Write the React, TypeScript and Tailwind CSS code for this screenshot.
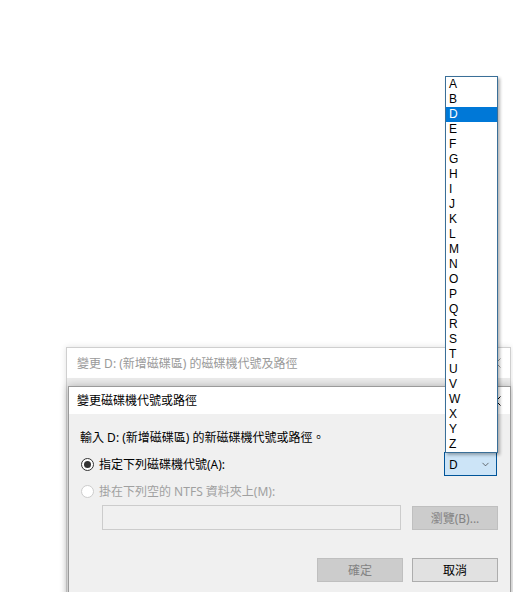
import { ChevronDown } from 'lucide-react'

const LETTERS = ['A', 'B', 'D', 'E', 'F', 'G', 'H', 'I', 'J', 'K', 'L', 'M', 'N', 'O', 'P', 'Q', 'R', 'S', 'T', 'U', 'V', 'W', 'X', 'Y', 'Z']
const SELECTED = 'D'

function CloseX({ className }: { className: string }) {
  return (
    <svg width="10" height="10" viewBox="0 0 10 10" className={className}>
      <path d="M0.5 0.5 L9.5 9.5 M9.5 0.5 L0.5 9.5" stroke="currentColor" strokeWidth="1" fill="none" />
    </svg>
  )
}

function Radio({ checked, disabled }: { checked?: boolean; disabled?: boolean }) {
  return (
    <span
      className={
        'flex h-[13px] w-[13px] items-center justify-center rounded-full border bg-white ' +
        (disabled ? 'border-[#cccccc]' : 'border-[#333333]')
      }
    >
      {checked && <span className="h-[7px] w-[7px] rounded-full bg-[#333333]" />}
    </span>
  )
}

function Button({ label, disabled }: { label: string; disabled?: boolean }) {
  return (
    <div
      className={
        'flex h-[24px] w-[86px] items-center justify-center border text-[12px] ' +
        (disabled
          ? 'border-[#bfbfbf] bg-[#cccccc] text-[#838383]'
          : 'border-[#adadad] bg-[#e1e1e1] text-[#000000]')
      }
    >
      {label}
    </div>
  )
}

function App() {
  return (
    <div className="relative h-[592px] w-[513px] overflow-hidden bg-white font-['Noto_Sans','Noto_Sans_CJK_TC',sans-serif] text-[12px] leading-[15px]">
      {/* back window */}
      <div className="absolute left-[66px] top-[347px] h-[260px] w-[445px] border border-[#cfcfcf] bg-[#ebebeb] shadow-[0_0_6px_rgba(0,0,0,0.12)]">
        <div className="flex h-[30px] items-center justify-between bg-white pl-[10px] pr-[8px]">
          <span className="text-[#9a9a9a]">變更 D: (新增磁碟區) 的磁碟機代號及路徑</span>
          <CloseX className="mr-[1px] text-[#9a9a9a]" />
        </div>
      </div>

      {/* front window */}
      <div className="absolute left-[68px] top-[386px] h-[220px] w-[443px] border border-[#9a9a9a] bg-[#f0f0f0] shadow-[0_0_8px_rgba(0,0,0,0.25)]">
        <div className="flex h-[27px] items-center justify-between bg-white pl-[8px] pr-[8px]">
          <span className="text-[#000000]">變更磁碟機代號或路徑</span>
          <CloseX className="mr-[1px] text-[#000000]" />
        </div>

        <div className="pl-[11px] pr-[12px] pt-[16px]">
          <p className="h-[15px] text-[#000000]">輸入 D: (新增磁碟區) 的新磁碟機代號或路徑。</p>

          <div className="mt-[7px] flex h-[24px] items-center justify-between pr-[1px]">
            <div className="flex items-center gap-[5px] pl-[1px]">
              <Radio checked />
              <span className="text-[#000000]">指定下列磁碟機代號(A):</span>
            </div>
            <div className="flex h-[24px] w-[53px] items-center justify-between border border-[#005499] bg-[#cce4f7] pl-[4px] pr-[5px]">
              <span className="text-[#000000]">D</span>
              <ChevronDown size={11} strokeWidth={1.5} className="text-[#333333]" />
            </div>
          </div>

          <div className="mt-[3px] flex h-[24px] items-center gap-[5px] pl-[1px]">
            <Radio disabled />
            <span className="text-[#a0a0a0]">掛在下列空的 NTFS 資料夾上(M):</span>
          </div>

          <div className="mt-[2px] flex items-start justify-between pl-[22px]">
            <div className="h-[25px] w-[299px] border border-[#cccccc] bg-[#f0f0f0]" />
            <div className="mt-[1px]">
              <Button label="瀏覽(B)..." disabled />
            </div>
          </div>

          <div className="mt-[28px] flex justify-end gap-[9px]">
            <Button label="確定" disabled />
            <Button label="取消" />
          </div>
        </div>
      </div>

      {/* open drop-down list */}
      <ul className="absolute left-[445px] top-[76px] w-[53px] border border-[#3a6f98] bg-white font-['Liberation_Sans',sans-serif] shadow-[2px_2px_3px_rgba(0,0,0,0.3)]">
        {LETTERS.map((l) => (
          <li
            key={l}
            className={
              'h-[15px] overflow-hidden pl-[3px] text-[12px] leading-[15px] ' +
              (l === SELECTED ? 'bg-[#0078d7] text-white' : 'text-[#000000]')
            }
          >
            {l}
          </li>
        ))}
      </ul>
    </div>
  )
}

export default App
